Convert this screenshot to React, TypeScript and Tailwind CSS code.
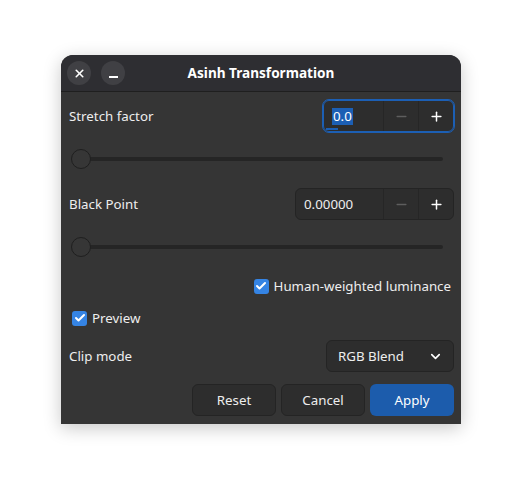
import { Check, ChevronDown, Minus, Plus, X } from 'lucide-react'

function SpinBox({ value, focused = false, width }: { value: string; focused?: boolean; width: string }) {
  return (
    <div
      className={
        'flex h-[32px] items-stretch rounded-[6px] border bg-[#2d2d2d] ' +
        width +
        (focused ? ' border-[#1c5fb4] outline outline-1 outline-[#1c5fb4]' : ' border-[#242424]')
      }
    >
      <div className="relative flex flex-1 items-center pl-[8px]">
        {focused ? (
          <>
            <span className="bg-[#1c5fb4] px-[1px] leading-[17px] text-white">{value}</span>
            <span className="absolute bottom-[1px] left-[2px] h-[2px] w-[12px] bg-[#1c5fb4]" />
          </>
        ) : (
          <span className="text-[#eeeeee]">{value}</span>
        )}
      </div>
      <div className="flex w-[35px] items-center justify-center border-l border-[#262626] text-[#5e5e5e]">
        <Minus size={15} strokeWidth={2.2} />
      </div>
      <div className="flex w-[35px] items-center justify-center border-l border-[#262626] text-white">
        <Plus size={15} strokeWidth={2.4} />
      </div>
    </div>
  )
}

function Slider() {
  return (
    <div className="relative flex h-[22px] items-center pl-[10px] pr-[11px]">
      <div className="h-[4px] flex-1 rounded-full bg-[#252525]" />
      <div className="absolute left-[3px] top-[1px] h-[20px] w-[20px] rounded-full border border-[#1f1f1f] bg-[#363636]" />
    </div>
  )
}

function CheckBox() {
  return (
    <span className="flex h-[15px] w-[15px] items-center justify-center rounded-[3px] bg-[#3584e4] text-white">
      <Check size={12} strokeWidth={4} />
    </span>
  )
}

export default function App() {
  return (
    <div
      className="flex h-[491px] w-[522px] justify-center bg-white pt-[55px] text-[13.3px] leading-[20px] text-[#eeeeee]"
      style={{ fontFamily: '"Noto Sans", "Open Sans", sans-serif' }}
    >
      <div className="flex h-[369px] w-[400px] flex-col overflow-hidden rounded-t-[12px] bg-[#353535] shadow-[0_4px_18px_rgba(0,0,0,0.22)]">
        {/* header bar */}
        <div className="relative flex h-[37px] shrink-0 items-center justify-center border-b border-[#1f1f1f] bg-[#2e2e32]">
          <div className="absolute left-[6px] top-[6px] flex gap-[10px]">
            <span className="flex h-[24px] w-[24px] items-center justify-center rounded-full bg-[#404044] text-white">
              <X size={13} strokeWidth={3} />
            </span>
            <span className="flex h-[24px] w-[24px] items-end justify-center rounded-full bg-[#404044] pb-[7px]">
              <span className="h-[2px] w-[9px] bg-white" />
            </span>
          </div>
          <span className="text-[13.6px] font-bold text-white">Asinh Transformation</span>
        </div>

        <div className="flex flex-col px-[7px] pt-[8px]">
          <div className="flex items-center justify-between">
            <span className="pl-[1px]">Stretch factor</span>
            <SpinBox value="0.0" focused width="w-[131px]" />
          </div>
          <div className="mt-[16px]">
            <Slider />
          </div>

          <div className="mt-[18px] flex items-center justify-between">
            <span className="pl-[1px]">Black Point</span>
            <SpinBox value="0.00000" width="w-[159px]" />
          </div>
          <div className="mt-[16px]">
            <Slider />
          </div>

          <div className="mt-[18px] flex h-[20px] items-center justify-end gap-[5px] pr-[3px]">
            <CheckBox />
            <span>Human-weighted luminance</span>
          </div>

          <div className="mt-[12px] flex h-[20px] items-center gap-[5px] pl-[4px]">
            <CheckBox />
            <span>Preview</span>
          </div>

          <div className="mt-[12px] flex items-center justify-between">
            <span className="pl-[1px]">Clip mode</span>
            <div className="flex h-[32px] w-[128px] items-center justify-between rounded-[6px] border border-[#242424] bg-[#2d2d2d] pl-[11px] pr-[10px]">
              <span>RGB Blend</span>
              <ChevronDown size={15} strokeWidth={2.6} className="text-white" />
            </div>
          </div>

          <div className="mt-[12px] flex justify-end gap-[5px]">
            <button className="h-[32px] w-[84px] rounded-[6px] border border-[#242424] bg-[#2d2d2d] text-[#eeeeee]">Reset</button>
            <button className="h-[32px] w-[84px] rounded-[6px] border border-[#242424] bg-[#2d2d2d] text-[#eeeeee]">Cancel</button>
            <button className="h-[32px] w-[84px] rounded-[6px] bg-[#1c5cac] text-white">Apply</button>
          </div>
        </div>
      </div>
    </div>
  )
}
